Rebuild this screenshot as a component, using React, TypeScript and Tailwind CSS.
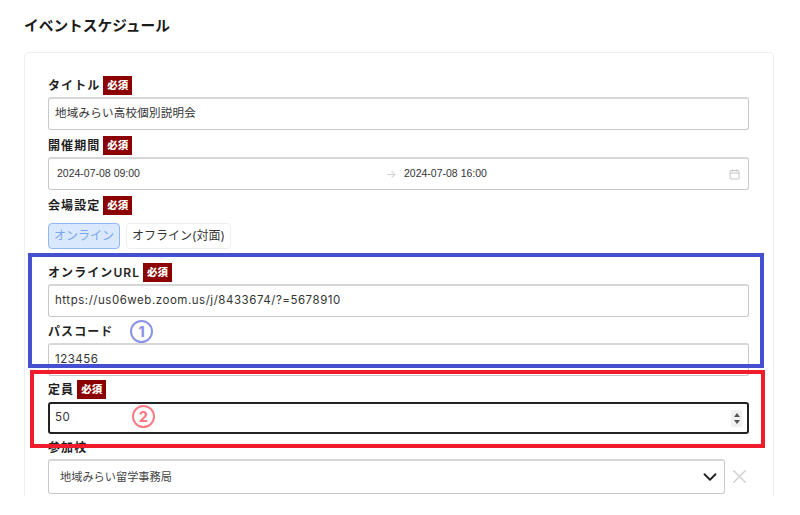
import React from "react";
import { ChevronDown, X } from "lucide-react";

const jp = "font-['Inter','Noto_Sans_CJK_JP',sans-serif]";

const Required = () => (
  <span className="ml-[3px] flex h-[19px] w-[29px] items-center justify-center bg-[#8b0000] text-[10.5px] font-black text-white">
    必須
  </span>
);

const Label = ({
  text,
  required,
  className = "",
}: {
  text: string;
  required?: boolean;
  className?: string;
}) => (
  <div className={`flex h-[19px] items-center ${className}`}>
    <span className="text-[12px] font-semibold tracking-[0.09em] text-[#1f1f1f]">{text}</span>
    {required && <Required />}
  </div>
);

const Box = ({
  children,
  className = "",
}: {
  children: React.ReactNode;
  className?: string;
}) => (
  <div
    className={`flex items-center rounded-[3px] border border-[#c8c8c8] border-t-2 border-t-[#d6d6d6] bg-white text-[#333] ${className}`}
  >
    {children}
  </div>
);

const CalendarIcon = () => (
  <svg width="11" height="11" viewBox="0 0 11 11" fill="none" stroke="#c4c4c4" strokeWidth="1">
    <rect x="1" y="1.5" width="9" height="8.5" rx="1" />
    <path d="M1 4h9M3.5 0.5v2M7.5 0.5v2" />
  </svg>
);

export default function App() {
  return (
    <div className={`relative h-[515px] w-[800px] overflow-hidden bg-white ${jp}`}>
      <h1 className="pl-6 pt-[15px] text-[14.7px] leading-[22px] font-bold text-[#1a1a1a]">
        イベントスケジュール
      </h1>

      <div className="mx-6 mt-[15px] h-[444px] w-[750px] rounded-t-[5px] border border-b-0 border-[#eeeef2] pl-[23px] pr-[24px] pt-[23px]">
        <Label text="タイトル" required />
        <Box className="mt-[2px] h-[33px] px-[6px] text-[11.5px] tracking-[0.25px]">
          地域みらい高校個別説明会
        </Box>

        <Label text="開催期間" required className="mt-[6px]" />
        <Box className="mt-[2px] h-[33px] px-2 font-['Liberation_Sans',sans-serif] text-[10.5px]">
          <span className="w-[329px]">2024-07-08 09:00</span>
          <span className="w-[18px] font-['Inter',sans-serif] text-[11px] text-[#cfcfcf]">→</span>
          <span className="flex-1">2024-07-08 16:00</span>
          <CalendarIcon />
        </Box>

        <Label text="会場設定" required className="mt-[6px]" />
        <div className="mt-[8px] flex h-[26px] gap-[6px] text-[12px]">
          <div className="flex w-[72px] items-center justify-center rounded-[4px] border border-[#8db8f5] bg-[#d9e8fd] text-[#7ba7ee]">
            オンライン
          </div>
          <div className="flex w-[105px] items-center justify-center rounded-[4px] border border-[#eeeeee] text-[#333]">
            オフライン(対面)
          </div>
        </div>

        <Label text="オンラインURL" required className="mt-[14px]" />
        <Box className="mt-[2px] h-[33px] px-[6px] text-[11.5px] tracking-[0.53px]">
          https://us06web.zoom.us/j/8433674/?=5678910
        </Box>

        <Label text="パスコード" className="mt-[5px]" />
        <Box className="mt-[2px] h-[33px] px-[6px] text-[11.5px] tracking-[0.5px]">123456</Box>

        <Label text="定員" required className="mt-[4px]" />
        <div className="mt-[3px] flex h-[32px] items-center justify-between rounded-[3px] border-2 border-[#222] px-[6px] text-[11.5px] text-[#333]">
          <span className="-ml-px tracking-[0.5px]">50</span>
          <span className="mr-[-1px] flex h-[17px] w-[11px] flex-col items-center justify-center gap-[3px] bg-[#f0f0f0]">
            <span className="h-0 w-0 border-x-[3.5px] border-b-[4px] border-x-transparent border-b-[#555]" />
            <span className="h-0 w-0 border-x-[3.5px] border-t-[4px] border-x-transparent border-t-[#555]" />
          </span>
        </div>

        <Label text="参加校" className="mt-[4px]" />
        <div className="mt-[2px] flex items-center">
          <Box className="h-[35px] w-[677px] shrink-0 justify-between pl-[11px] pr-[3px] text-[11.2px] text-[#444]">
            地域みらい留学事務局
            <ChevronDown size={22} strokeWidth={2} color="#222" />
          </Box>
          <X size={23} strokeWidth={1.5} color="#d0d0d0" className="ml-[3px] shrink-0" />
        </div>
      </div>

      {/* annotations drawn over the form */}
      <div className="absolute left-[28px] top-[253px] h-[115px] w-[736px] border-4 border-[#4450d0]" />
      <div className="absolute left-[30px] top-[370px] h-[78px] w-[735px] border-4 border-[#f01c2c]" />
      <span className="absolute left-[130px] top-[320px] flex h-[23px] w-[23px] items-center justify-center rounded-full border-2 border-[#8c93e6] text-[14px] font-extrabold text-[#8c93e6]">
        1
      </span>
      <span className="absolute left-[132px] top-[405px] flex h-[23px] w-[23px] items-center justify-center rounded-full border-2 border-[#fb7c86] text-[14px] font-extrabold text-[#fb7c86]">
        2
      </span>
    </div>
  );
}
